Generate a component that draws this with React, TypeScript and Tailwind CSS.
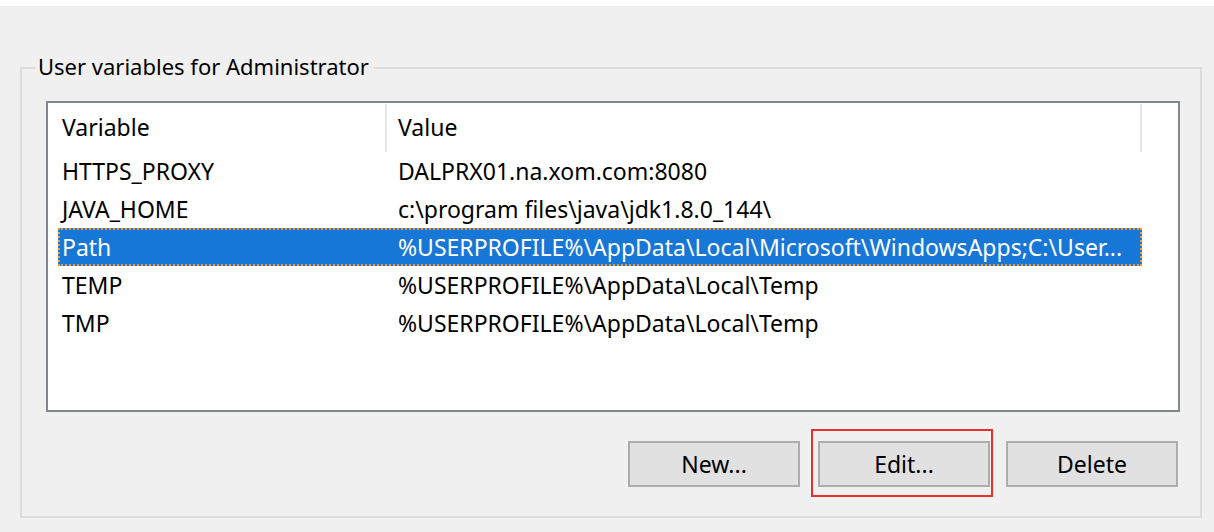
import React from 'react';

const rows = [
  { name: 'HTTPS_PROXY', value: 'DALPRX01.na.xom.com:8080' },
  { name: 'JAVA_HOME', value: 'c:\\program files\\java\\jdk1.8.0_144\\' },
  { name: 'Path', value: '%USERPROFILE%\\AppData\\Local\\Microsoft\\WindowsApps;C:\\User...', selected: true },
  { name: 'TEMP', value: '%USERPROFILE%\\AppData\\Local\\Temp' },
  { name: 'TMP', value: '%USERPROFILE%\\AppData\\Local\\Temp' },
];

const btn =
  'w-[172px] h-[46px] border-2 border-[#adadad] bg-[#e1e1e1] text-black flex items-center justify-center leading-none';

export default function App() {
  return (
    <div className="w-[1214px] h-[532px] overflow-hidden bg-[#f0f0f0] border-t-[6px] border-white font-['Noto_Sans',sans-serif] text-[23px] text-black">
      <div className="relative ml-[20px] mt-[61px] w-[1182px] h-[451px] border-2 border-[#dcdcdc] pl-[24px] pr-[20px] pt-[32px]">
        <span className="absolute left-[13px] top-[-19px] bg-[#f0f0f0] pl-[3px] pr-[5px] leading-[32px] text-[22px]">
          User variables for Administrator
        </span>

        <div className="h-[311px] border-2 border-[#828790] bg-white">
          <div className="flex h-[49px]">
            <div className="w-[337px] pl-[14px] flex items-center">Variable</div>
            <div className="w-[2px] mt-[1px] h-[48px] bg-[#e5e5e5]" />
            <div className="w-[753px] pl-[11px] flex items-center">Value</div>
            <div className="w-[2px] mt-[1px] h-[48px] bg-[#e5e5e5]" />
          </div>
          {rows.map((r) => (
            <div
              key={r.name}
              className={
                r.selected
                  ? 'ml-[10px] w-[1084px] h-[38px] flex items-center bg-[#1777d6] text-white border-2 border-dotted border-[#f39a2e]'
                  : 'ml-[10px] w-[1084px] h-[38px] flex items-center border-2 border-transparent'
              }
            >
              <div className="w-[338px] pl-[2px] whitespace-nowrap">{r.name}</div>
              <div className="flex-1 whitespace-nowrap overflow-hidden">{r.value}</div>
            </div>
          ))}
        </div>

        <div className="flex justify-end items-start mt-[17px] mr-[2px]">
          <button className={`${btn} mt-[12px]`}>New...</button>
          <div className="ml-[11px] border-2 border-[#e8302a] pt-[10px] pb-[8px] pl-[5px] pr-[1px]">
            <button className={btn}>Edit...</button>
          </div>
          <button className={`${btn} mt-[12px] ml-[13px]`}>Delete</button>
        </div>
      </div>
    </div>
  );
}
